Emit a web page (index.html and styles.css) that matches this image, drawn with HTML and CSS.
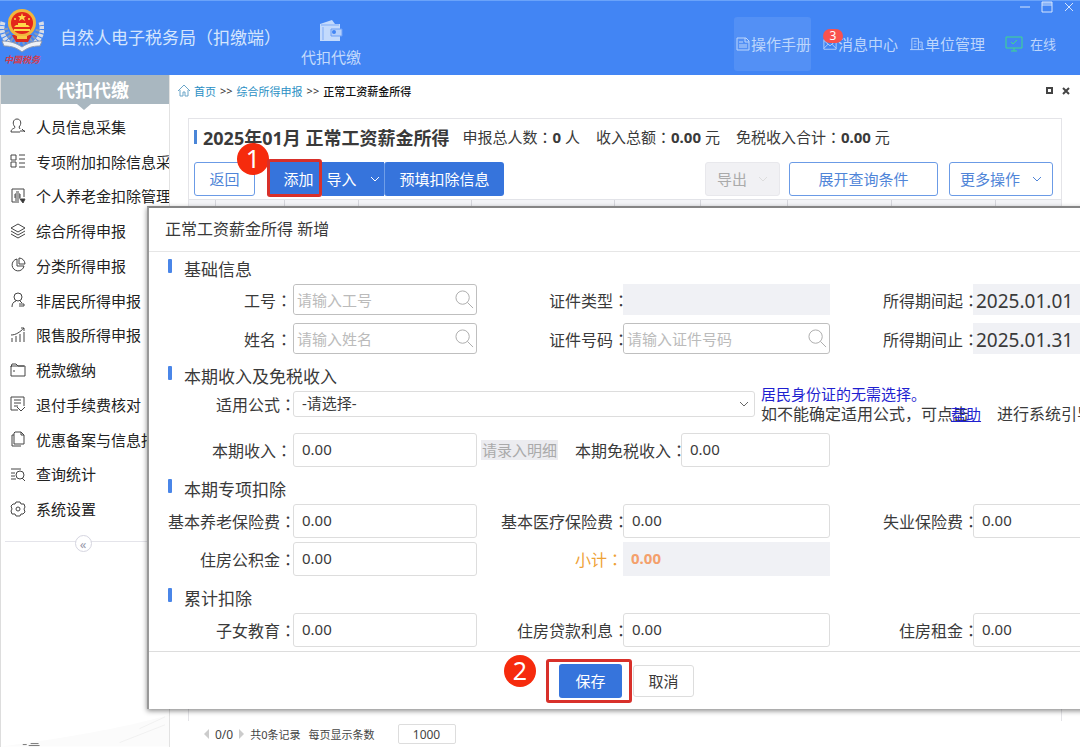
FILE: index.html
```html
<!DOCTYPE html>
<html lang="zh-CN">

<head>
    <meta charset="UTF-8" />
    <meta name="viewport" content="width=device-width, initial-scale=1.0"/>
    <title>自然人电子税务局（扣缴端）</title>

    <link rel="stylesheet" href="styles.css">
</head>

<body>

    <header class="header">
        <div class="logo">
            <svg width="44" height="46" viewBox="0 0 44 46">
                <path d="M3 14C0 24 4 32 12 37M41 14c3 10-1 18-9 23" fill="none" stroke="#d9dde6" stroke-width="5" stroke-dasharray="3 1"/>
                <path d="M6 20c1 8 6 13 16 15 10-2 15-7 16-15" fill="none" stroke="#8c98b4" stroke-width="4" stroke-dasharray="2 2"/>
                <path d="M2 33c8 0 14 2 20 6 6-4 12-6 20-6l-2 5c-8 0-13 2-18 6-5-4-10-6-18-6z" fill="#eef0f5" stroke="#8b97b0"/>
                <path d="M12 27h20l-4 7H16z" fill="#d8291f"/>
                <circle cx="22" cy="15" r="14" fill="#f2b63c"/>
                <circle cx="22" cy="15" r="11" fill="#e3261b"/>
                <path d="M22 5l1 3h3l-2 2 1 3-3-2-3 2 1-3-2-2h3z" fill="#ffd84a"/>
                <circle cx="15" cy="11" r="1" fill="#ffd84a"/>
                <circle cx="29" cy="11" r="1" fill="#ffd84a"/>
                <path d="M14 21h16v2H14zM16 17h12l2 2H14zM18 15h8v2h-8z" fill="#ffd84a"/>
                <path d="M17 28h10v3H17z" fill="#f7c843"/>
            </svg>
            <span class="logo-name">中国税务</span>
        </div>
        <h1 class="app-title">自然人电子税务局（扣缴端）</h1>
        <a class="module" href="#">
            <svg width="24" height="24" viewBox="0 0 24 24">
                <path d="M1 5l12-4 3 4h5v17H1z" fill="#c3dafc"/>
                <path d="M2 6h18M4 8v13" fill="none" stroke="#7fabf6"/>
                <path d="M12 10h11v7H12z" fill="#b5d0fb" stroke="#6c9ff5"/>
                <circle cx="15" cy="13" r="2" fill="#4285f4"/>
            </svg>
            代扣代缴
        </a>
        <nav class="top-nav">
            <a class="nav-link active" href="#">
                <svg width="14" height="14" viewBox="0 0 14 14"><path d="M1 1h9l3 3v9H1zM9 1v4h4M3 5h4M3 8h8M3 10h8"/></svg>操作手册
            </a>
            <a class="nav-link" href="#">
                <svg width="14" height="14" viewBox="0 0 16 14"><path d="M1 2h14v11H1zM1 3l7 6 7-6M1 12l5-5M15 12l-5-5"/></svg>消息中心
                <span class="count">3</span>
            </a>
            <a class="nav-link" href="#">
                <svg width="14" height="14" viewBox="0 0 15 14"><path d="M2 13V1h7v12M9 5h4v8M0 13h15M4 4h3M4 7h3M4 10h3M11 8h1M11 10h1"/></svg>单位管理
            </a>
            <span class="online">
                <svg width="18" height="16" viewBox="0 0 18 16"><path d="M1 1h16v11H1zM6 15h6M9 12v3M6 6l2 2 4-4"/></svg>在线
            </span>
        </nav>
        <div class="window-controls">
            <button aria-label="最小化"><svg width="12" height="12" viewBox="0 0 12 12"><path d="M1 6h10"/></svg></button>
            <button aria-label="最大化"><svg width="12" height="12" viewBox="0 0 12 12"><path d="M1 1h10v10H1zM1 4h10M1 2h10"/></svg></button>
            <button aria-label="关闭"><svg width="12" height="12" viewBox="0 0 12 12"><path d="M2 2l8 8M10 2l-8 8"/></svg></button>
        </div>
    </header>

    <div class="layout">
        <aside class="sidebar">
            <h2 class="sidebar-title">代扣代缴</h2>
            <ul class="menu">
                <li><a href="#"><svg viewBox="0 0 16 16"><path d="M5 9c-3-3-2-8 2-8s5 5 2 8l1 2M5 9c0 2-4 1-4 5h9M10 13h5M12 11l3 3"/></svg>人员信息采集</a></li>
                <li><a href="#"><svg viewBox="0 0 16 16"><path d="M1 2h5v5H1zM1 9h5v5H1zM9 2h6M9 6h6M9 10h6M9 14h6"/></svg>专项附加扣除信息采集</a></li>
                <li><a href="#"><svg viewBox="0 0 16 16"><path d="M9 14H2V1h12v8M5 6h5v4H5zM6 4h3M5 8h5M5 12h4"/><path d="M10 11h5l-2 4z" fill="#333"/></svg>个人养老金扣除管理</a></li>
                <li><a href="#"><svg viewBox="0 0 16 16"><path d="M8 1l7 4-7 4-7-4zM1 8l7 4 7-4M1 11l7 4 7-4"/></svg>综合所得申报</a></li>
                <li><a href="#"><svg viewBox="0 0 16 16"><path d="M7 2a6 6 0 1 0 7 7H7zM9 1v6h6a6 6 0 0 0-6-6z"/></svg>分类所得申报</a></li>
                <li><a href="#"><svg viewBox="0 0 16 16"><circle cx="8" cy="5" r="4"/><path d="M6 9c-3 1-4 3-4 6M10 9l2 2M9 12h5v2H9"/></svg>非居民所得申报</a></li>
                <li><a href="#"><svg viewBox="0 0 16 16"><path d="M2 15v-4M6 15V9M10 15V7M14 15V5M1 8c5 0 9-3 13-7M11 1h3v3"/></svg>限售股所得申报</a></li>
                <li><a href="#"><svg viewBox="0 0 16 16"><path d="M1 5l1-3h4l2 2h6M1 4h14v10H1zM4 8v2"/></svg>税款缴纳</a></li>
                <li><a href="#"><svg viewBox="0 0 16 16"><path d="M8 14H1V1h13v9M4 4h7M4 7h7M4 10h4M7 11l4 4 4-4"/></svg>退付手续费核对</a></li>
                <li><a href="#"><svg viewBox="0 0 16 16"><path d="M5 1h6l3 3v9H4V2zM11 1v3h3M4 4H2v11h9"/></svg>优惠备案与信息报送</a></li>
                <li><a href="#"><svg viewBox="0 0 16 16"><path d="M1 3h10M1 7h4M1 10h4M1 13h5M12 12l3 3"/><circle cx="10" cy="9" r="4"/></svg>查询统计</a></li>
                <li><a href="#"><svg viewBox="0 0 16 16"><path d="M6 1h4l1 2h3l1 3-1 2 1 3-2 2h-2l-1 2H6l-1-2H2l-1-3 1-2-1-3 2-2h2z"/><circle cx="8" cy="8" r="2"/></svg>系统设置</a></li>
            </ul>
            <div class="fold"><button aria-label="收起">«</button></div>
            <svg class="sidebar-art" viewBox="0 0 170 38">
                <path d="M0 38C60 30 120 20 170 6v32z" fill="#fbfbfb"/>
                <path d="M140 20l26-12M120 34l46-18" stroke="#f1f1f1"/>
                <path d="M22 36h4M28 37h11M30 35h8" stroke="#777"/>
            </svg>
        </aside>

        <main class="main">
            <div class="crumbs">
                <svg width="12" height="13" viewBox="0 0 12 13"><path d="M0 7l6-6 6 6M2 6v6h3V8h2v4h3V6" fill="none" stroke="#6aa5c8"/></svg>
                <a href="#">首页</a>
                <span>&gt;&gt;</span>
                <a href="#">综合所得申报</a>
                <span>&gt;&gt;</span>
                <strong>正常工资薪金所得</strong>
                <div class="tab-controls">
                    <button aria-label="还原"><svg width="8" height="8" viewBox="0 0 8 8"><path d="M1 1h5v5H1z"/></svg></button>
                    <button aria-label="关闭页签"><svg width="8" height="8" viewBox="0 0 8 8"><path d="M1 1l6 6M7 1L1 7"/></svg></button>
                </div>
            </div>

            <section class="panel">
                <div class="summary">
                    <h2>2025年01月 正常工资薪金所得</h2>
                    <span>申报总人数<i class="colon" lang="ja">：</i><b>0</b> 人</span>
                    <span>收入总额<i class="colon" lang="ja">：</i><b>0.00</b> 元</span>
                    <span>免税收入合计<i class="colon" lang="ja">：</i><b>0.00</b> 元</span>
                </div>
                <div class="toolbar">
                    <button class="btn btn-outline btn-back">返回</button>
                    <div class="btn-group">
                        <div class="marked marked-add">
                            <button class="btn btn-primary btn-add">添加</button>
                            <span class="step">1</span>
                        </div>
                        <button class="btn btn-primary btn-import">导入<svg class="chevron" viewBox="0 0 10 6"><path d="M1 1l4 4 4-4"/></svg></button>
                        <button class="btn btn-primary btn-fill">预填扣除信息</button>
                    </div>
                    <button class="btn btn-disabled btn-export" disabled>导出<svg class="chevron" viewBox="0 0 10 6"><path d="M1 1l4 4 4-4"/></svg></button>
                    <button class="btn btn-outline btn-query">展开查询条件</button>
                    <button class="btn btn-outline btn-more">更多操作<svg class="chevron" viewBox="0 0 10 6"><path d="M1 1l4 4 4-4"/></svg></button>
                </div>
                <div class="grid-head">
                    <span></span><span></span><span></span><span></span><span></span>
                    <span></span><span></span><span></span><span></span><span></span>
                </div>
            </section>

            <footer class="pager">
                <button class="prev" aria-label="上一页"></button>
                <span class="page-no">0/0</span>
                <button class="next" aria-label="下一页"></button>
                <span class="total">共0条记录</span>
                <label for="pageSize">每页显示条数</label>
                <input type="text" id="pageSize" value="1000" />
            </footer>
        </main>
    </div>

    <div class="modal" role="dialog" aria-labelledby="modalTitle">
        <div class="modal-header" id="modalTitle">正常工资薪金所得 新增</div>
        <form class="modal-body">
            <section class="section">
                <h3>基础信息</h3>
                <div class="fields fields-basic">
                    <label class="short" for="empNo">工号<i class="colon" lang="ja">：</i></label>
                    <div class="search">
                        <input type="text" id="empNo" placeholder="请输入工号" />
                        <svg viewBox="0 0 20 20"><circle cx="8" cy="8" r="7"/><path d="M13 13l6 6"/></svg>
                    </div>
                    <label for="idType">证件类型<i class="colon" lang="ja">：</i></label>
                    <input type="text" id="idType" class="locked" readonly />
                    <label for="dateFrom">所得期间起<i class="colon" lang="ja">：</i></label>
                    <input type="text" id="dateFrom" class="locked date" value="2025.01.01" readonly />

                    <label class="short" for="empName">姓名<i class="colon" lang="ja">：</i></label>
                    <div class="search">
                        <input type="text" id="empName" placeholder="请输入姓名" />
                        <svg viewBox="0 0 20 20"><circle cx="8" cy="8" r="7"/><path d="M13 13l6 6"/></svg>
                    </div>
                    <label for="idNo">证件号码<i class="colon" lang="ja">：</i></label>
                    <div class="search">
                        <input type="text" id="idNo" placeholder="请输入证件号码" />
                        <svg viewBox="0 0 20 20"><circle cx="8" cy="8" r="7"/><path d="M13 13l6 6"/></svg>
                    </div>
                    <label for="dateTo">所得期间止<i class="colon" lang="ja">：</i></label>
                    <input type="text" id="dateTo" class="locked date" value="2025.01.31" readonly />
                </div>
            </section>

            <section class="section">
                <h3>本期收入及免税收入</h3>
                <div class="formula-row">
                    <label for="formula">适用公式<i class="colon" lang="ja">：</i></label>
                    <div class="select">
                        <select id="formula">
                            <option>-请选择-</option>
                        </select>
                        <svg class="chevron" viewBox="0 0 10 6"><path d="M1 1l4 4 4-4"/></svg>
                    </div>
                    <div class="hint">
                        <p class="hint-blue">居民身份证的无需选择。</p>
                        <p>如不能确定适用公式<i class="colon" lang="ja">，</i>可点击<a href="#">帮助</a>进行系统引导</p>
                    </div>
                </div>
                <div class="income-row">
                    <label class="short" for="income">本期收入<i class="colon" lang="ja">：</i></label>
                    <input type="text" id="income" value="0.00" />
                    <button type="button" class="detail-btn" disabled>请录入明细</button>
                    <label class="tight" for="taxFree">本期免税收入<i class="colon" lang="ja">：</i></label>
                    <input type="text" id="taxFree" value="0.00" />
                </div>
            </section>

            <section class="section">
                <h3>本期专项扣除</h3>
                <div class="fields">
                    <label for="pension">基本养老保险费<i class="colon" lang="ja">：</i></label>
                    <input type="text" id="pension" value="0.00" />
                    <label for="medical">基本医疗保险费<i class="colon" lang="ja">：</i></label>
                    <input type="text" id="medical" value="0.00" />
                    <label for="jobless">失业保险费<i class="colon" lang="ja">：</i></label>
                    <input type="text" id="jobless" value="0.00" />

                    <label for="housingFund">住房公积金<i class="colon" lang="ja">：</i></label>
                    <input type="text" id="housingFund" value="0.00" />
                    <label class="subtotal-label" for="subtotal">小计<i class="colon" lang="ja">：</i></label>
                    <input type="text" id="subtotal" class="locked subtotal" value="0.00" readonly />
                </div>
            </section>

            <section class="section">
                <h3>累计扣除</h3>
                <div class="fields">
                    <label for="child">子女教育<i class="colon" lang="ja">：</i></label>
                    <input type="text" id="child" value="0.00" />
                    <label for="loan">住房贷款利息<i class="colon" lang="ja">：</i></label>
                    <input type="text" id="loan" value="0.00" />
                    <label for="rent">住房租金<i class="colon" lang="ja">：</i></label>
                    <input type="text" id="rent" value="0.00" />
                </div>
            </section>
        </form>
        <div class="modal-footer">
            <div class="marked marked-save">
                <button class="btn btn-primary btn-save">保存</button>
                <span class="step">2</span>
            </div>
            <button class="btn btn-cancel">取消</button>
        </div>
    </div>

</body>

</html>
```
FILE: styles.css
```css
:root {
    --header: #4285f4;
    --primary: #3674dc;
    --outline: #6b9be6;
    --text: #3a3a3a;
    --muted: #bbb;
    --line: #ddd;
    --locked: #f0f1f5;
    --mark: #d8302a;
}

* {
    box-sizing: border-box;
}

body {
    font-family: "Noto Sans", "Noto Sans CJK SC", sans-serif;
    margin: 0;
    height: 100vh;
    display: flex;
    flex-direction: column;
    position: relative;
    overflow: hidden;
    color: var(--text);
    background: #fff;
    font-size: 15px;
}

h1, h2, h3, p, ul {
    margin: 0;
    padding: 0;
}

button,
input,
select {
    font-family: inherit;
    font-size: 15px;
    color: inherit;
}

button {
    padding: 0;
    border: none;
    background: none;
    cursor: pointer;
}

a {
    text-decoration: none;
}

svg {
    flex: none;
}

.colon {
    font-family: "Noto Sans CJK JP", sans-serif;
    font-style: normal;
}

/* header */

.header {
    height: 75px;
    flex: none;
    display: flex;
    position: relative;
    background: var(--header);
    border-top: 1px solid #6aa3fa;
    color: #d5e5fd;
}

.logo {
    width: 44px;
    padding-top: 7px;
    line-height: 12px;
}

.logo svg {
    display: block;
}

.logo-name {
    display: block;
    font-size: 9px;
    font-weight: bold;
    font-style: italic;
    text-align: center;
    color: #d43a4c;
}

.app-title {
    font-size: 17px;
    font-weight: normal;
    line-height: 74px;
    padding-left: 16px;
    white-space: nowrap;
}

.module {
    display: flex;
    flex-direction: column;
    align-items: center;
    gap: 3px;
    margin-left: 20px;
    padding-top: 18px;
    line-height: 22px;
    color: #c3dafc;
}

.top-nav {
    margin: 16px 24px 4px auto;
    display: flex;
    gap: 12px;
    line-height: 58px;
    white-space: nowrap;
}

.nav-link,
.online {
    display: flex;
    align-items: center;
    position: relative;
    gap: 1px;
    color: #bdd6fc;
}

.nav-link.active {
    background: rgba(255, 255, 255, 0.09);
    padding-left: 2px;
    border-radius: 3px;
}

.top-nav svg,
.window-controls svg {
    fill: none;
    stroke: currentColor;
}

.online {
    gap: 7px;
    margin-left: 8px;
    font-size: 13px;
}

.online svg {
    stroke: #3fd98a;
}

.count {
    position: absolute;
    left: 0;
    top: 12px;
    width: 20px;
    height: 14px;
    border-radius: 7px;
    background: #f9524f;
    color: #fff;
    font-size: 12px;
    line-height: 14px;
    text-align: center;
}

.window-controls {
    position: absolute;
    top: 0;
    right: 5px;
    display: flex;
    gap: 10px;
}

.window-controls svg {
    display: block;
}

/* sidebar */

.layout {
    flex: 1;
    display: flex;
    min-height: 0;
}

.sidebar {
    width: 170px;
    flex: none;
    display: flex;
    flex-direction: column;
    border-right: 1px solid #e2e2e2;
    border-left: 1px solid #ddd;
}

.sidebar-title {
    position: relative;
    background: #a9b7c0;
    color: #fff;
    font-size: 18px;
    line-height: 30px;
    height: 29px;
    padding-left: 56px;
}

.sidebar-title::after {
    content: "";
    position: absolute;
    left: 76px;
    top: 29px;
    border: 7px solid transparent;
    border-top: 6px solid #a9b7c0;
    border-bottom: none;
}

.menu {
    list-style: none;
    height: 417px;
    margin-top: 5px;
    display: grid;
    grid-auto-rows: 1fr;
    overflow: hidden;
}

.menu a {
    display: flex;
    align-items: center;
    gap: 10px;
    height: 100%;
    padding-left: 9px;
    color: #222;
    white-space: nowrap;
}

.menu svg {
    width: 16px;
    height: 16px;
    fill: none;
    stroke: #444;
}

.fold {
    margin: 15px 0 auto 4px;
    border-top: 1px solid #e4e4ea;
    text-align: center;
    height: 18px;
}

.fold button {
    width: 17px;
    height: 17px;
    margin: -7px 8px 0 0;
    border: 1px solid #d5d5e0;
    border-radius: 50%;
    background: #fff;
    color: #99a;
    font-size: 13px;
    line-height: 12px;
    vertical-align: top;
}

.sidebar-art {
    display: block;
    width: 100%;
}

/* main */

.main {
    flex: 1;
    min-width: 0;
    display: flex;
    flex-direction: column;
}

.crumbs {
    display: flex;
    align-items: center;
    height: 31px;
    padding: 0 10px 0 8px;
    gap: 4px;
    font-size: 11px;
    color: #333;
}

.crumbs a {
    color: #2a8fc4;
}

.crumbs strong {
    font-weight: 500;
    color: #111;
}

.tab-controls {
    margin-left: auto;
    display: flex;
    gap: 8px;
}

.tab-controls svg {
    display: block;
    fill: none;
    stroke: #444;
    stroke-width: 2;
}

.panel {
    flex: 1;
    margin: 12px 18px 0;
    border: 1px solid #e4e4e8;
    border-bottom: none;
}

.summary {
    display: flex;
    align-items: center;
    gap: 16px;
    height: 38px;
    padding: 0 0 3px 5px;
    white-space: nowrap;
}

.summary h2 {
    display: flex;
    align-items: center;
    gap: 6px;
    margin-right: -3px;
    font-size: 18px;
}

.summary h2::before {
    content: "";
    width: 3px;
    height: 14px;
    background: #4a86d8;
}

.toolbar {
    display: flex;
    height: 42px;
    padding: 5px 8px 3px 5px;
}

.btn {
    display: flex;
    align-items: center;
    justify-content: center;
    height: 34px;
    padding-bottom: 1px;
    border-radius: 3px;
    white-space: nowrap;
}

.btn-primary {
    background: var(--primary);
    color: #fff;
}

.btn-outline {
    border: 1px solid var(--outline);
    color: #5085d8;
}

.btn-disabled {
    background: #f1f1f4;
    border: 1px solid #e8e8ec;
    color: #aaa;
}

.chevron {
    width: 10px;
    height: 6px;
    fill: none;
    stroke: currentColor;
}

.btn-back {
    width: 61px;
}

.btn-group {
    display: flex;
    margin: 0 auto 0 12px;
}

.btn-add {
    width: 55px;
    padding-left: 8px;
}

.btn-import {
    width: 62px;
    gap: 13px;
    border-radius: 0;
}

.btn-fill {
    width: 120px;
    border-left: 1px solid #6f9ee8;
}

.btn-export {
    width: 75px;
    gap: 11px;
    margin-right: 9px;
}

.btn-export .chevron {
    stroke: #ddd;
}

.btn-query {
    width: 149px;
    margin-right: 11px;
}

.btn-more {
    width: 104px;
    gap: 12px;
}

.marked {
    position: relative;
}

.marked::after {
    content: "";
    position: absolute;
    border: 3px solid var(--mark);
    border-radius: 3px;
    pointer-events: none;
}

.marked-add::after {
    inset: -3px 0 -1px 0;
}

.marked-save::after {
    inset: -5px -10px -5px -13px;
}

.step {
    position: absolute;
    width: 32px;
    height: 32px;
    border-radius: 50%;
    background: #f62b0d;
    color: #fff;
    font-size: 25px;
    line-height: 31px;
    text-align: center;
}

.marked-add .step {
    left: -30px;
    top: -19px;
}

.marked-save .step {
    left: -55px;
    top: -9px;
}

.grid-head {
    display: grid;
    grid-template-columns: 26fr 69fr 74fr 113fr 143fr 87fr 87fr 104fr 104fr 66fr;
    height: 30px;
    background: #f3f4f7;
    border-top: 1px solid #e2e3e8;
    border-bottom: 1px solid #e2e3e8;
}

.grid-head span + span {
    border-left: 1px solid #d5d6dc;
}

.pager {
    display: flex;
    align-items: center;
    height: 26px;
    padding-left: 34px;
    font-size: 11px;
    color: #444;
}

.pager button {
    border: 5px solid transparent;
}

.pager .prev {
    border-right-color: #ccc;
    border-left: none;
    margin-right: 6px;
}

.pager .next {
    border-left-color: #ccc;
    border-right: none;
    margin: 0 6px;
}

.page-no {
    font-size: 12px;
}

.total {
    margin-right: 8px;
}

.pager input {
    width: 58px;
    height: 20px;
    margin-left: 23px;
    border: 1px solid var(--line);
    border-radius: 2px;
    font-size: 12px;
    text-align: center;
}

/* modal, wider than the window */

.modal {
    position: absolute;
    left: 147px;
    right: -60px;
    top: 206px;
    background: #fff;
    border-top: 2px solid #858585;
    border-left: 2px solid #999;
    box-shadow: 0 2px 5px rgba(0, 0, 0, 0.45);
    font-size: 16px;
}

.modal-header {
    height: 44px;
    line-height: 42px;
    padding-left: 16px;
    border-bottom: 1px solid #e6e6e6;
}

.modal-body {
    padding: 3px 0 4px;
}

.section + .section {
    margin-top: 8px;
}

.section h3 {
    display: flex;
    gap: 12px;
    padding-left: 19px;
    font-size: 17px;
    font-weight: normal;
    line-height: 29px;
}

.section h3::before {
    content: "";
    width: 4px;
    height: 14px;
    margin-top: 4px;
    background: #4a86e8;
    border-radius: 1px;
}

.fields {
    display: grid;
    grid-template-columns: 144px 184px 146px 207px 143px 1fr;
    grid-auto-rows: 34px;
    row-gap: 4px;
}

.fields-basic {
    grid-auto-rows: 31px;
    row-gap: 8px;
}

.modal label {
    align-self: center;
    margin-right: -3px;
    text-align: right;
    white-space: nowrap;
}

/* the colon hangs over the edge of the box that follows */
.fields label:nth-of-type(3n + 2),
.fields label:nth-of-type(3n),
.modal .tight {
    margin-right: -6px;
}

.modal .short {
    padding-right: 4px;
}

.modal .subtotal-label {
    color: #eea236;
    padding-right: 6px;
}

.modal input,
.modal select {
    width: 100%;
    min-width: 0;
    height: 100%;
    padding: 0 8px 2px;
    border: 1px solid var(--line);
    border-radius: 3px;
    background: #fff;
}

.modal .locked {
    border: none;
    border-radius: 0;
    background: var(--locked);
}

.modal .date {
    font-size: 19px;
    padding: 3px 3px 0;
}

.modal .subtotal {
    color: #f4a06c;
    font-weight: bold;
}

.search {
    display: flex;
    align-items: center;
    padding-right: 2px;
    border: 1px solid #bfbfbf;
    border-radius: 3px;
}

.modal .search input {
    flex: 1;
    padding: 0 3px;
    border: none;
}

.search input::placeholder {
    color: var(--muted);
}

.search svg {
    width: 19px;
    height: 19px;
    fill: none;
    stroke: #aaa;
}

.formula-row {
    display: grid;
    grid-template-columns: 144px 462px 1fr;
    grid-template-rows: 26px;
    margin-bottom: 16px;
}

.select {
    display: flex;
    align-items: center;
    position: relative;
}

.modal select {
    appearance: none;
}

.select .chevron {
    position: absolute;
    right: 6px;
    stroke: #666;
}

.hint {
    padding-left: 6px;
    margin-top: -6px;
    line-height: 19px;
    white-space: nowrap;
}

.hint-blue,
.hint a {
    font-size: 15px;
    color: #1f1fd0;
}

.hint a {
    margin: 0 16px 0 -18px;
    text-decoration: underline;
}

.income-row {
    display: grid;
    grid-template-columns: 144px 184px 4px 77px 123px 149px;
    height: 34px;
}

.detail-btn {
    grid-column: 4;
    align-self: center;
    height: 20px;
    line-height: 20px;
    background: #ececf0;
    color: #aaa;
}

.modal-footer {
    display: flex;
    align-items: center;
    gap: 11px;
    height: 58px;
    padding-left: 410px;
    border-top: 1px solid #ddd;
}

.btn-save {
    width: 63px;
}

.btn-cancel {
    width: 61px;
    height: 32px;
    border: 1px solid var(--line);
}
```
